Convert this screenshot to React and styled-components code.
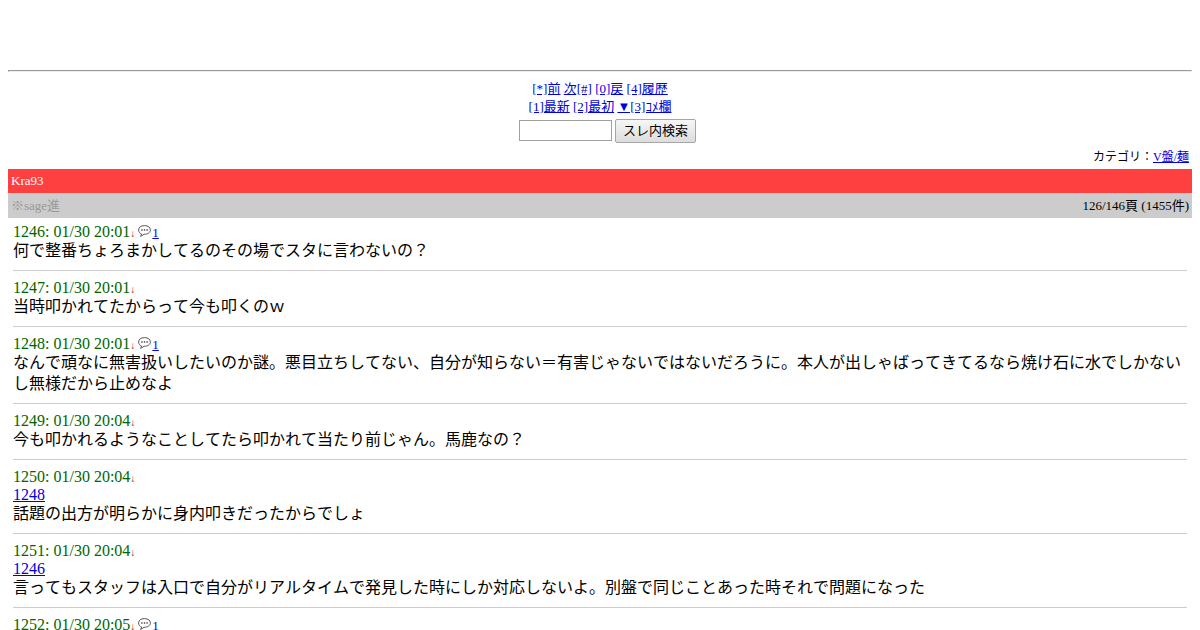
import React from "react";
import styled, { createGlobalStyle } from "styled-components";

const GlobalStyle = createGlobalStyle`
  body {
    margin: 0;
    padding: 0 8px;
    background: #fff;
    color: #000;
    font-family: "Liberation Serif", "Noto Sans CJK JP", serif;
    font-size: 16px;
    font-kerning: none;
    line-height: 18px;
  }
`;

const Link = styled.a`
  color: #0000dd;
  text-decoration: underline;
`;

const Divider = styled.hr`
  margin: 70px 0 8px;
  border: 1px solid;
  border-color: #999 #eee #eee #999;
`;

const Nav = styled.nav`
  font-size: 13px;
  line-height: 18px;
  text-align: center;
`;

const SearchForm = styled.form`
  display: flex;
  justify-content: center;
  align-items: center;
  gap: 3px;
  padding: 3px 0 2px 15px;
`;

const SearchInput = styled.input`
  box-sizing: border-box;
  width: 93px;
  height: 21px;
  margin: 0 0 2px;
  padding: 1px 3px;
  border: 1px solid #a0a0a0;
  border-radius: 0;
  background: #fff;
  font-family: "Liberation Sans", "Noto Sans CJK JP", sans-serif;
  font-size: 13px;
`;

const SearchButton = styled.button`
  box-sizing: border-box;
  height: 24px;
  padding: 0 7px;
  border: 1px solid #a6a6a6;
  border-radius: 2px;
  background: linear-gradient(#f6f6f6, #dddddd);
  color: #000;
  font-family: "Liberation Sans", "Noto Sans CJK JP", sans-serif;
  font-size: 13px;
  line-height: 20px;
`;

const Category = styled.div`
  padding: 3px;
  font-size: 12px;
  line-height: 18px;
  text-align: right;
`;

const Title = styled.h1`
  margin: 0;
  padding: 3px;
  background: #ff4040;
  color: #fff;
  font-size: 13px;
  font-weight: normal;
  line-height: 18px;
`;

const InfoBar = styled.div`
  display: flex;
  justify-content: space-between;
  padding: 3px;
  background: #ccc;
  font-size: 13px;
  line-height: 19px;
`;

const Notice = styled.span`
  color: #999;
`;

const Posts = styled.main`
  padding: 5px;
`;

const Post = styled.article`
  & + & {
    margin-top: 8px;
    padding-top: 8px;
    border-top: 1px solid #ccc;
  }
`;

const PostHead = styled.div`
  height: 18px;
  color: #006600;
  white-space: nowrap;
`;

const Arrow = styled.span`
  color: #bb0000;
  font-size: 10px;
  line-height: 10px;
`;

const Replies = styled.span`
  margin-left: 3px;
  font-size: 13px;
  line-height: 13px;
`;

const Bubble = styled.svg`
  width: 13px;
  height: 12px;
  margin-right: 1px;
  vertical-align: 0;
`;

const Body = styled.p`
  margin: -1px 0 0;
  padding-bottom: 1px;
  line-height: 21px;
`;

const posts = [
  { id: 1246, time: "20:01", replies: 1, text: "何で整番ちょろまかしてるのその場でスタに言わないの？" },
  { id: 1247, time: "20:01", text: "当時叩かれてたからって今も叩くのｗ" },
  {
    id: 1248,
    time: "20:01",
    replies: 1,
    text: "なんで頑なに無害扱いしたいのか謎。悪目立ちしてない、自分が知らない＝有害じゃないではないだろうに。本人が出しゃばってきてるなら焼け石に水でしかないし無様だから止めなよ",
  },
  { id: 1249, time: "20:04", text: "今も叩かれるようなことしてたら叩かれて当たり前じゃん。馬鹿なの？" },
  { id: 1250, time: "20:04", quote: 1248, text: "話題の出方が明らかに身内叩きだったからでしょ" },
  {
    id: 1251,
    time: "20:04",
    quote: 1246,
    text: "言ってもスタッフは入口で自分がリアルタイムで発見した時にしか対応しないよ。別盤で同じことあった時それで問題になった",
  },
  { id: 1252, time: "20:05", replies: 1 },
];

function ReplyCount({ count }) {
  return (
    <Replies>
      <Bubble viewBox="0 0 13 12" aria-hidden="true">
        <path
          d="M6.5 .6C3 .6.6 2.3.6 4.9c0 2.1 1.3 3.5 3 4.1L2.6 11.4 6.1 9.3C9.9 9.3 12.4 7.5 12.4 4.9 12.4 2.3 10 .6 6.5 .6Z"
          fill="#fff"
          stroke="#555"
          strokeWidth="1"
          strokeLinejoin="round"
        />
        <g fill="#222">
          <circle cx="3.9" cy="5" r="0.8" />
          <circle cx="6.5" cy="5" r="0.8" />
          <circle cx="9.1" cy="5" r="0.8" />
        </g>
      </Bubble>
      <Link href="#replies">{count}</Link>
    </Replies>
  );
}

export default function App() {
  return (
    <>
      <GlobalStyle />
      <Divider />
      <Nav>
        <div>
          <Link href="#prev">[*]前</Link> <Link href="#next">次[#]</Link>{" "}
          <Link href="#back">[0]戻</Link> <Link href="#history">[4]履歴</Link>
        </div>
        <div>
          <Link href="#latest">[1]最新</Link> <Link href="#first">[2]最初</Link>{" "}
          <Link href="#comment">▼[3]ｺﾒ欄</Link>
        </div>
      </Nav>
      <SearchForm onSubmit={(e) => e.preventDefault()}>
        <SearchInput type="text" name="word" aria-label="スレ内検索" />
        <SearchButton type="submit">スレ内検索</SearchButton>
      </SearchForm>
      <Category>
        カテゴリ：<Link href="#category">V盤/麺</Link>
      </Category>
      <Title>Kra93</Title>
      <InfoBar>
        <Notice>※sage進</Notice>
        <span>126/146頁 (1455件)</span>
      </InfoBar>
      <Posts>
        {posts.map((post) => (
          <Post key={post.id} id={`post-${post.id}`}>
            <PostHead>
              {post.id}: 01/30 {post.time}
              <Arrow>↓</Arrow>
              {post.replies && <ReplyCount count={post.replies} />}
            </PostHead>
            {post.quote && (
              <div>
                <Link href={`#post-${post.quote}`}>{post.quote}</Link>
              </div>
            )}
            {post.text && <Body>{post.text}</Body>}
          </Post>
        ))}
      </Posts>
    </>
  );
}
